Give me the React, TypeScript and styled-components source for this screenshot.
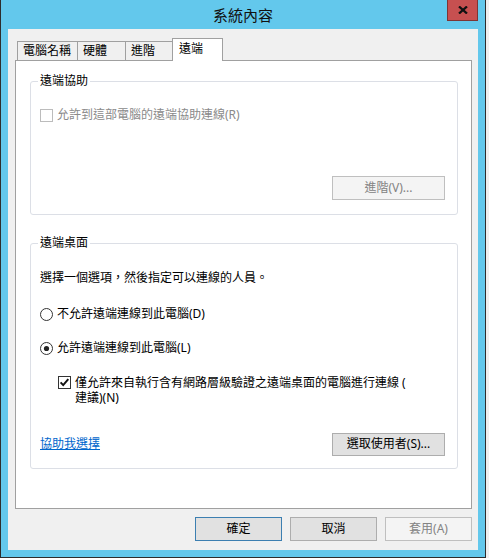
import React from "react";
import styled, { createGlobalStyle } from "styled-components";

const GlobalStyle = createGlobalStyle`
  html, body {
    margin: 0;
    padding: 0;
    background: #efefef;
  }
  body {
    font-family: "Noto Sans", "Noto Sans CJK TC", sans-serif;
    font-size: 12px;
    color: #000;
  }
`;

const Window = styled.div`
  width: 486px;
  height: 558px;
  box-sizing: border-box;
  background: #63c8ec;
  border: 1px solid #2d2d2d;
  border-top: none;
  display: flex;
  flex-direction: column;
  padding: 0 7px 7px;
`;

const TitleBar = styled.div`
  height: 29px;
  flex: none;
  display: grid;
  grid-template-columns: 1fr auto 1fr;
  align-items: center;
`;

const Title = styled.div`
  grid-column: 2;
  font-family: "Noto Sans CJK TC", sans-serif;
  font-size: 15px;
  line-height: 18px;
  color: #111;
`;

const CloseButton = styled.div`
  grid-column: 3;
  justify-self: end;
  align-self: start;
  width: 31px;
  height: 21px;
  box-sizing: border-box;
  background: #c75050;
  border: 1px solid #7d3535;
  border-top: none;
  display: flex;
  align-items: center;
  justify-content: center;
`;

const Client = styled.div`
  flex: 1;
  background: #f0f0f0;
  display: flex;
  flex-direction: column;
  padding: 9px 6px 9px 7px;
`;

const TabStrip = styled.div`
  display: flex;
  align-items: flex-end;
  height: 22px;
  padding-left: 2px;
  position: relative;
  z-index: 1;
`;

const Tab = styled.div<{ $w: number; $active?: boolean }>`
  width: ${(p) => p.$w}px;
  height: ${(p) => (p.$active ? 23 : 19)}px;
  margin-bottom: ${(p) => (p.$active ? -1 : 0)}px;
  box-sizing: border-box;
  border: 1px solid #a0a0a0;
  border-bottom: none;
  background: ${(p) => (p.$active ? "#fff" : "#f0f0f0")};
  padding-left: ${(p) => (p.$active ? 6 : 5)}px;
  padding-bottom: ${(p) => (p.$active ? 2 : 0)}px;
  display: flex;
  align-items: center;
  line-height: 14px;
  white-space: nowrap;
  & + & {
    margin-left: -1px;
  }
`;

const Panel = styled.div`
  flex: 1;
  background: #fff;
  border: 1px solid #a0a0a0;
  display: flex;
  flex-direction: column;
  gap: 28px;
  padding: 20px 13px 0 14px;
`;

const GroupBox = styled.div<{ $pb: number }>`
  border: 1px solid #dcdfe6;
  border-radius: 3px;
  display: flex;
  flex-direction: column;
  padding: 0 12px ${(p) => p.$pb}px 9px;
`;

const Legend = styled.div`
  align-self: flex-start;
  margin: -8px 0 0 -2px;
  padding: 0 2px;
  background: #fff;
  line-height: 14px;
`;

const Line = styled.div<{ $mt: number; $indent?: number }>`
  margin-top: ${(p) => p.$mt}px;
  margin-left: ${(p) => p.$indent ?? 0}px;
  line-height: 14px;
  white-space: nowrap;
`;

const OptionRow = styled.label<{ $mt: number; $indent?: number; $disabled?: boolean }>`
  display: flex;
  align-items: flex-start;
  gap: 4px;
  margin-top: ${(p) => p.$mt}px;
  margin-left: ${(p) => p.$indent ?? 0}px;
  line-height: 14px;
  white-space: nowrap;
  color: ${(p) => (p.$disabled ? "#8a8a8a" : "#000")};
`;

const Wrapped = styled.span`
  display: flex;
  flex-direction: column;
  line-height: 15px;
  margin-top: -0.5px;
`;

const Mark = styled.span`
  flex: none;
  width: 13px;
  height: 13px;
  display: block;
  margin-top: 1px;
  svg {
    display: block;
  }
`;

const ButtonRow = styled.div<{ $mt: number; $between?: boolean }>`
  display: flex;
  align-items: center;
  justify-content: ${(p) => (p.$between ? "space-between" : "flex-end")};
  margin-top: ${(p) => p.$mt}px;
`;

const Button = styled.button<{ $w: number; $h?: number; $default?: boolean }>`
  width: ${(p) => p.$w}px;
  height: ${(p) => p.$h ?? 23}px;
  box-sizing: border-box;
  padding: 0;
  margin: 0;
  font-family: "Noto Sans", "Noto Sans CJK TC", sans-serif;
  font-size: 12px;
  line-height: 14px;
  color: #000;
  background: #e1e1e1;
  border: 1px solid ${(p) => (p.$default ? "#3c7fb1" : "#adadad")};
  &:disabled {
    color: #838383;
    background: #f4f4f4;
    border-color: #bfbfbf;
  }
`;

const Link = styled.a`
  color: #0066cc;
  text-decoration: underline;
  line-height: 14px;
`;

const Actions = styled.div`
  display: flex;
  justify-content: flex-end;
  gap: 8px;
  margin-top: 8px;
`;

const CheckBox = ({ checked, disabled }: { checked?: boolean; disabled?: boolean }) => (
  <Mark>
    <svg width="13" height="13" viewBox="0 0 13 13">
      <rect x="0.5" y="0.5" width="12" height="12" fill="#fff" stroke={disabled ? "#bcbcbc" : "#333"} />
      {checked && (
        <path d="M2.6 6.4 L5.2 9.1 L10.3 3.2" fill="none" stroke="#111" strokeWidth="2" />
      )}
    </svg>
  </Mark>
);

const Radio = ({ checked }: { checked?: boolean }) => (
  <Mark>
    <svg width="13" height="13" viewBox="0 0 13 13">
      <circle cx="6.5" cy="6.5" r="6" fill="#fff" stroke="#333" />
      {checked && <circle cx="6.5" cy="6.5" r="2.6" fill="#222" />}
    </svg>
  </Mark>
);

export default function App() {
  return (
    <>
      <GlobalStyle />
      <Window>
        <TitleBar>
          <Title>系統內容</Title>
          <CloseButton>
            <svg width="10" height="8" viewBox="0 0 10 8">
              <path d="M1 0.5 L9 7.5 M9 0.5 L1 7.5" stroke="#111" strokeWidth="2.3" />
            </svg>
          </CloseButton>
        </TitleBar>
        <Client>
          <TabStrip>
            <Tab $w={61}>電腦名稱</Tab>
            <Tab $w={49}>硬體</Tab>
            <Tab $w={48}>進階</Tab>
            <Tab $w={51} $active>
              遠端
            </Tab>
          </TabStrip>
          <Panel>
            <GroupBox $pb={14}>
              <Legend>遠端協助</Legend>
              <OptionRow $mt={20} $disabled>
                <CheckBox disabled />
                <span>允許到這部電腦的遠端協助連線(R)</span>
              </OptionRow>
              <ButtonRow $mt={54}>
                <Button $w={113} $h={24} disabled>
                  進階(V)...
                </Button>
              </ButtonRow>
            </GroupBox>
            <GroupBox $pb={12}>
              <Legend>遠端桌面</Legend>
              <Line $mt={21}>選擇一個選項，然後指定可以連線的人員。</Line>
              <OptionRow $mt={22}>
                <Radio />
                <span>不允許遠端連線到此電腦(D)</span>
              </OptionRow>
              <OptionRow $mt={20}>
                <Radio checked />
                <span>允許遠端連線到此電腦(L)</span>
              </OptionRow>
              <OptionRow $mt={20} $indent={18}>
                <CheckBox checked />
                <Wrapped>
                  <span>僅允許來自執行含有網路層級驗證之遠端桌面的電腦進行連線 (</span>
                  <span>建議)(N)</span>
                </Wrapped>
              </OptionRow>
              <ButtonRow $mt={28} $between>
                <Link href="#">協助我選擇</Link>
                <Button $w={113}>選取使用者(S)...</Button>
              </ButtonRow>
            </GroupBox>
          </Panel>
          <Actions>
            <Button $w={87} $h={24} $default>
              確定
            </Button>
            <Button $w={87} $h={24}>
              取消
            </Button>
            <Button $w={87} $h={24} disabled>
              套用(A)
            </Button>
          </Actions>
        </Client>
      </Window>
    </>
  );
}
